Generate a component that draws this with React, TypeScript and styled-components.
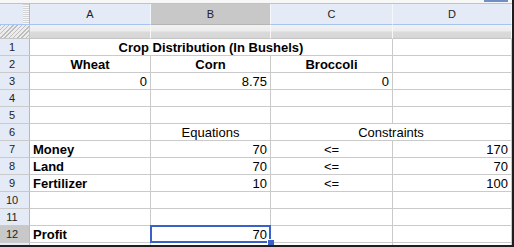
import React from 'react'
import styled, { createGlobalStyle, css } from 'styled-components'

type Align = 'left' | 'center' | 'right'

interface ICellDef {
  text?: string
  align?: Align
  bold?: boolean
  span?: number
  active?: boolean
}

const COLUMNS = ['A', 'B', 'C', 'D']
const ACTIVE_COL = 'B'
const ACTIVE_ROW = 12

const E: ICellDef = {}

// contents of the crop planning sheet, one entry per row
const SHEET: ICellDef[][] = [
  [{ text: 'Crop Distribution (In Bushels)', align: 'center', bold: true, span: 3 }, E],
  [
    { text: 'Wheat', align: 'center', bold: true },
    { text: 'Corn', align: 'center', bold: true },
    { text: 'Broccoli', align: 'center', bold: true },
    E,
  ],
  [{ text: '0', align: 'right' }, { text: '8.75', align: 'right' }, { text: '0', align: 'right' }, E],
  [E, E, E, E],
  [E, E, E, E],
  [E, { text: 'Equations', align: 'center' }, { text: 'Constraints', align: 'center', span: 2 }],
  [
    { text: 'Money', bold: true },
    { text: '70', align: 'right' },
    { text: '<=', align: 'center' },
    { text: '170', align: 'right' },
  ],
  [
    { text: 'Land', bold: true },
    { text: '70', align: 'right' },
    { text: '<=', align: 'center' },
    { text: '70', align: 'right' },
  ],
  [
    { text: 'Fertilizer', bold: true },
    { text: '10', align: 'right' },
    { text: '<=', align: 'center' },
    { text: '100', align: 'right' },
  ],
  [E, E, E, E],
  [E, E, E, E],
  [{ text: 'Profit', bold: true }, { text: '70', align: 'right', active: true }, E, E],
]

export default function App(): JSX.Element {
  return (
    <>
      <GlobalStyleSCP />
      <FrameSCP>
        <TopStripSCP>
          <ScrollThumbSCP />
        </TopStripSCP>
        <GridSCP>
          <CornerHeadSCP>
            <SplitterSCP />
          </CornerHeadSCP>
          {COLUMNS.map(col => (
            <ColHeadSCP key={col} $active={col === ACTIVE_COL}>
              {col}
            </ColHeadSCP>
          ))}

          <BandCornerSCP />
          {COLUMNS.map(col => (
            <BandCellSCP key={col} />
          ))}

          {SHEET.map((row, r) => (
            <React.Fragment key={r}>
              <RowHeadSCP $active={r + 1 === ACTIVE_ROW}>{r + 1}</RowHeadSCP>
              {row.map((cell, c) => (
                <CellSCP
                  key={c}
                  $align={cell.align ?? 'left'}
                  $bold={!!cell.bold}
                  $span={cell.span ?? 1}
                  $active={!!cell.active}
                >
                  {cell.text}
                  {cell.active && (
                    <SelectionSCP>
                      <FillHandleSCP />
                    </SelectionSCP>
                  )}
                </CellSCP>
              ))}
            </React.Fragment>
          ))}

          {/* next row, scrolled mostly out of view */}
          <RowHeadSCP $active={false} />
          {COLUMNS.map(col => (
            <CellSCP key={col} $align={'left'} $bold={false} $span={1} $active={false} />
          ))}
        </GridSCP>
      </FrameSCP>
    </>
  )
}

const GlobalStyleSCP = createGlobalStyle`
  body {
    margin: 0;
    background: #ffffff;
  }
`

const FrameSCP = styled.div`
  width: 514px;
  height: 247px;
  box-sizing: border-box;
  border-right: 2px solid #1e1e1e;
  border-bottom: 2px solid #1e1e1e;
  overflow: hidden;
  background: #ffffff;
  font-family: 'Liberation Sans', Arial, sans-serif;
`

const TopStripSCP = styled.div`
  height: 3px;
  display: flex;
  justify-content: flex-end;
  padding-right: 4px;
  background: #f7f7f7;
  border-bottom: 1px solid #c2c2c2;
`

const ScrollThumbSCP = styled.div`
  width: 24px;
  height: 2px;
  background: #6f8fc9;
`

const GridSCP = styled.div`
  display: grid;
  grid-template-columns: 30px 121px 120px 122px 119px;
`

const headBlue = '#e4ebf7'
const headGrey = '#c8c8c8'
const gridLine = '#cacaca'

const CornerHeadSCP = styled.div`
  height: 20px;
  display: flex;
  justify-content: flex-end;
  background: ${headBlue};
  border-right: 1px solid #b9b9b9;
  border-bottom: 1px solid #a6c3f3;
`

const SplitterSCP = styled.div`
  width: 6px;
  background: repeating-linear-gradient(180deg, #d4d4d4 0 1px, #f6f6f6 1px 2px);
`

const ColHeadSCP = styled.div<{ $active: boolean }>`
  height: 20px;
  line-height: 20px;
  text-align: center;
  font-size: 11px;
  color: #222222;
  background: ${props => (props.$active ? headGrey : headBlue)};
  border-right: 1px solid #f4f7fc;
  border-bottom: 1px solid ${props => (props.$active ? '#b4b4b4' : '#a6c3f3')};
`

const BandCornerSCP = styled.div`
  height: 13px;
  background: repeating-linear-gradient(135deg, #bdbdbd 0 1px, #ececec 1px 3px);
  border-right: 1px solid #c4c4c4;
  border-bottom: 1px solid #c4c4c4;
`

const BandCellSCP = styled.div`
  height: 13px;
  background: linear-gradient(180deg, #f2f2f2 0%, #ececec 45%, #dadada 55%, #d6d6d6 100%);
  border-right: 1px solid #f7f7f7;
  border-bottom: 1px solid #c4c4c4;
`

const RowHeadSCP = styled.div<{ $active: boolean }>`
  height: 16px;
  line-height: 17px;
  padding-right: 5px;
  text-align: center;
  font-size: 11px;
  color: #222222;
  background: ${props => (props.$active ? headGrey : headBlue)};
  border-right: 1px solid #b9b9b9;
  border-bottom: 1px solid ${gridLine};
`

const CellSCP = styled.div<{ $align: Align; $bold: boolean; $span: number; $active: boolean }>`
  position: relative;
  grid-column: span ${props => props.$span};
  height: 16px;
  line-height: 18px;
  padding: 0 3px;
  font-size: 13px;
  color: #000000;
  white-space: nowrap;
  text-align: ${props => props.$align};
  font-weight: ${props => (props.$bold ? 700 : 400)};
  border-right: 1px solid ${gridLine};
  border-bottom: 1px solid ${gridLine};
  ${props =>
    props.$active &&
    css`
      z-index: 1;
    `}
`

const SelectionSCP = styled.div`
  position: absolute;
  inset: -1px -1px -1px -1px;
  border: 2px solid #3a60c9;
  pointer-events: none;
`

const FillHandleSCP = styled.div`
  position: absolute;
  right: -5px;
  bottom: -5px;
  width: 6px;
  height: 6px;
  background: #3a60c9;
  border: 1px solid #ffffff;
  border-width: 1px 0 0 1px;
`
